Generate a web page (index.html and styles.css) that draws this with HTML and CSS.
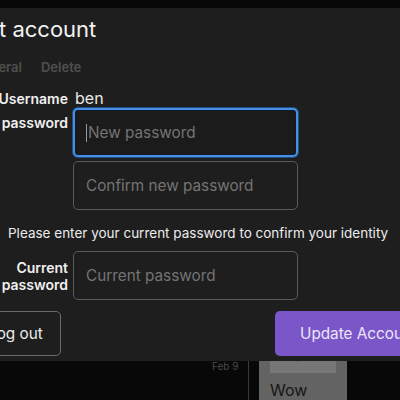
FILE: index.html
```html
<!DOCTYPE html>
<html>
<head>
<meta charset="utf-8">
<link rel="stylesheet" href="styles.css">
</head>
<body>
<div class="page">
  <div class="timeline">
    <div class="date">Feb 9</div>
    <div class="rule"></div>
    <div class="card">
      <div class="card-inner">Again</div>
      <div class="card-text">Wow</div>
    </div>
  </div>
</div>
<div class="modal">
  <h1 class="title">Edit account</h1>
  <div class="tabs"><span>General</span><span>Delete</span></div>
  <div class="form">
    <div class="label">Username</div>
    <div class="value">ben</div>
    <div class="label top">New password</div>
    <div class="inputs">
      <div class="input focus"><span class="caret"></span>New password</div>
      <div class="input">Confirm new password</div>
    </div>
    <div class="note">Please enter your current password to confirm your identity</div>
    <div class="label two">Current<br>password</div>
    <div class="input">Current password</div>
  </div>
  <div class="actions">
    <div class="btn outline">Log out</div>
    <div class="btn primary">Update Account</div>
  </div>
</div>
</body>
</html>
```
FILE: styles.css
```css
html, body {
  margin: 0;
  padding: 0;
  background: #080808;
  overflow: hidden;
  width: 400px;
  height: 400px;
  font-family: Inter, "Noto Sans", sans-serif;
}
.page {
  height: 400px;
  display: flex;
  flex-direction: column;
  justify-content: flex-end;
}
.timeline {
  display: flex;
  height: 60px;
}
.date {
  box-sizing: border-box;
  width: 236px;
  padding-left: 212px;
  padding-top: 20px;
  font-size: 10px;
  color: #4a4a4a;
  white-space: nowrap;
}
.rule {
  width: 1px;
  margin-left: 12px;
  background: #3a3a3a;
}
.card {
  margin-left: 10px;
  width: 88px;
  background: #636363;
  display: flex;
  flex-direction: column;
}
.card-inner {
  margin: 0 11px;
  height: 35px;
  box-sizing: border-box;
  background: #777;
  color: #1c1c1c;
  font-size: 16px;
  line-height: 20px;
  display: flex;
  align-items: flex-end;
  justify-content: center;
  padding-bottom: 11px;
  overflow: hidden;
}
.card-text {
  padding: 7px 0 0 11px;
  font-size: 16px;
  line-height: 20px;
  color: #161616;
}
.modal {
  position: absolute;
  left: -40px;
  top: 8px;
  width: 476px;
  height: 353px;
  background: #1e1e1e;
  box-sizing: border-box;
  padding: 7px 0 0 0;
}
.title {
  margin: 0 0 0 7px;
  font-size: 22px;
  font-weight: 400;
  color: #f2f2f2;
  line-height: 29px;
}
.tabs {
  display: flex;
  gap: 19px;
  margin: 15px 0 0 13px;
  font-size: 13px;
  font-weight: 600;
  color: #4f4f4f;
  line-height: 16px;
}
.form {
  display: grid;
  grid-template-columns: 108px 225px;
  column-gap: 5px;
  margin-top: 13px;
  align-items: center;
}
.label {
  text-align: right;
  font-size: 14px;
  font-weight: 600;
  color: #f0f0f0;
  line-height: 17px;
}
.label.top {
  align-self: start;
  padding-top: 6px;
}
.value {
  font-size: 16px;
  color: #e8e8e8;
  line-height: 20px;
  padding-left: 2px;
}
.inputs {
  display: flex;
  flex-direction: column;
  gap: 4px;
  margin-top: 0;
}
.input {
  height: 49px;
  box-sizing: border-box;
  border: 1px solid #5a5a5a;
  border-radius: 5px;
  padding: 0 12px;
  display: flex;
  align-items: center;
  font-size: 15.3px;
  color: #747474;
}
.input.focus {
  border: 2px solid #4a8ede;
  box-shadow: 0 0 0 1px #1d4f8f, inset 0 0 0 1px #0e1a2a;
  padding-left: 11px;
  background: #1b1b1b;
}
.caret {
  width: 1px;
  height: 18px;
  background: #9a9a9a;
  margin-right: 1px;
}
.note {
  grid-column: 1 / 3;
  justify-self: start;
  margin: 14px 0 9px 48px;
  font-size: 13.5px;
  color: #ececec;
  white-space: nowrap;
  line-height: 18px;
}
.label.two {
  line-height: 17px;
}
.actions {
  display: flex;
  justify-content: space-between;
  margin-top: 11px;
}
.btn {
  height: 45px;
  box-sizing: border-box;
  border-radius: 5px;
  display: flex;
  align-items: center;
  font-size: 15.3px;
}
.outline {
  border: 1px solid #6a6a6a;
  width: 102px;
  padding-left: 28px;
  color: #ececec;
  margin-left: -1px;
}
.primary {
  background: #7b56c9;
  color: #ece6f8;
  width: 175px;
  padding-left: 25px;
  margin-right: -14px;
}
```
